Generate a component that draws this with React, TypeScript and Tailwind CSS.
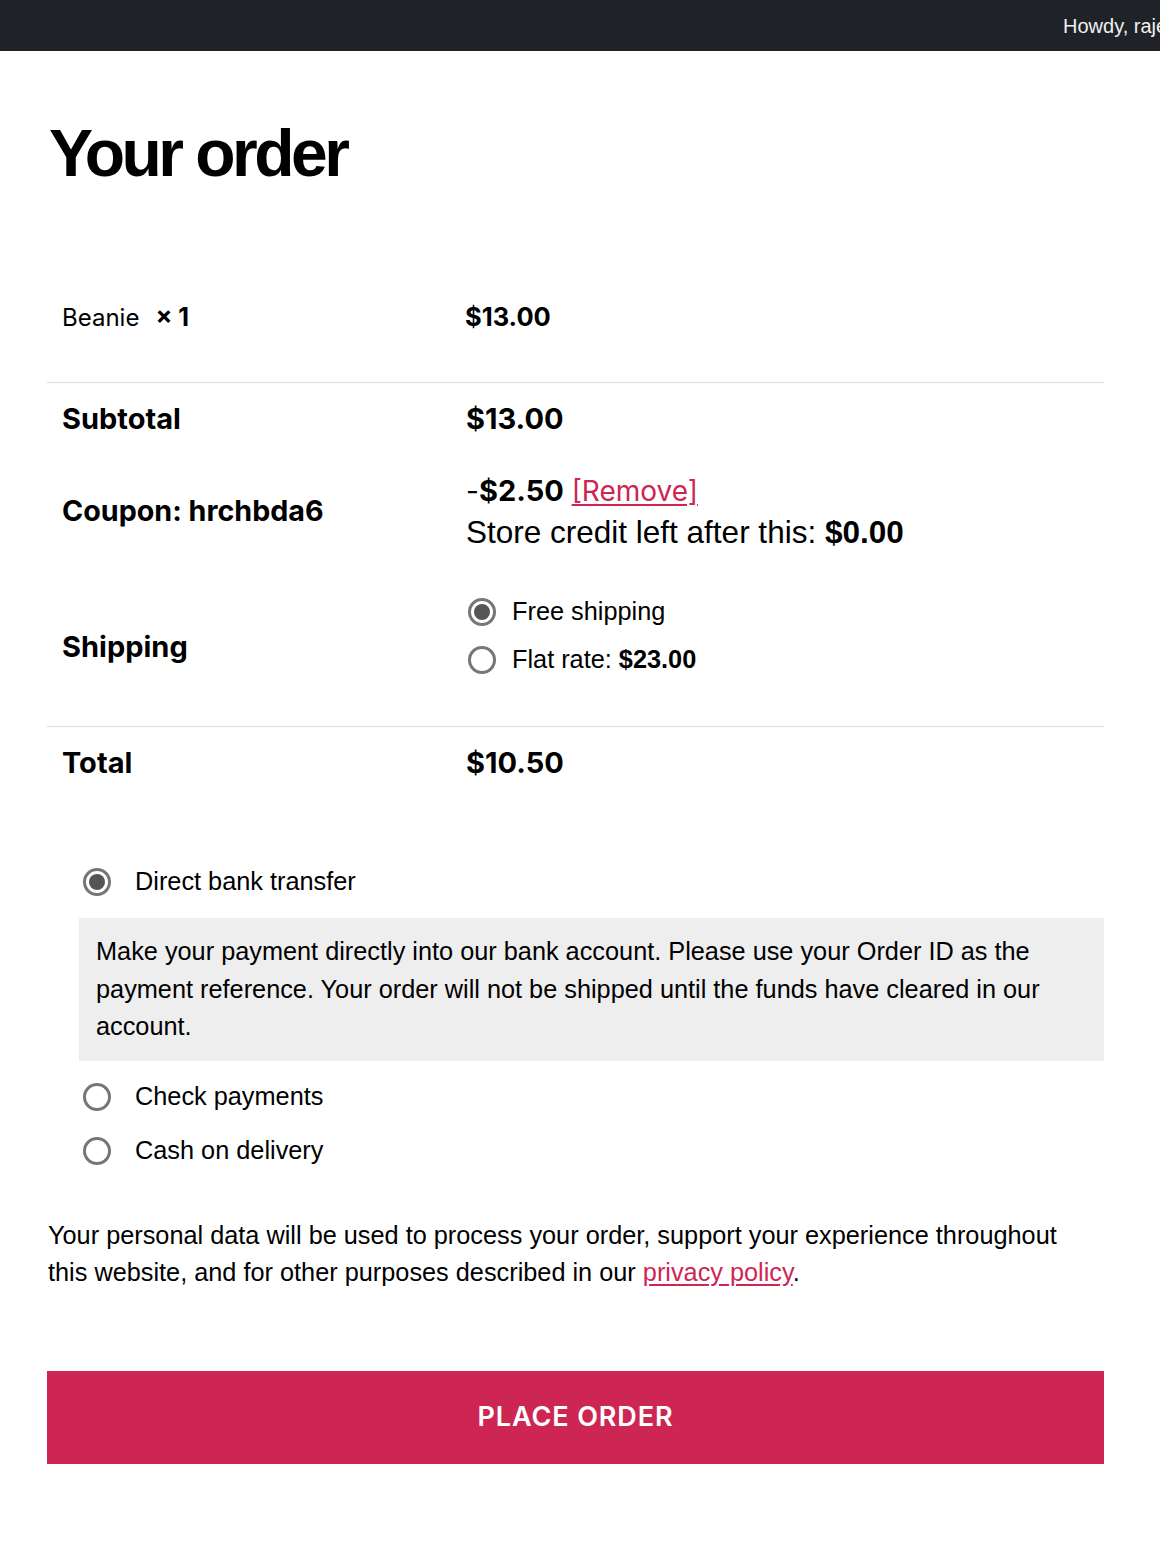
import React from "react";

const inter = "font-['Inter',sans-serif]";
const arial = "font-['Liberation_Sans',Arial,sans-serif]";

function Radio({ checked }: { checked?: boolean }) {
  return (
    <span className="flex h-[28px] w-[28px] shrink-0 items-center justify-center rounded-full border-[3px] border-[#767676] bg-white">
      {checked && <span className="h-[16px] w-[16px] rounded-full bg-[#555555]" />}
    </span>
  );
}

export default function App() {
  return (
    <div className="min-h-[1563px] bg-white text-black">
      {/* admin bar */}
      <div className="flex h-[51px] items-center justify-end bg-[#1f2327]">
        <div className={`w-[97px] overflow-hidden whitespace-nowrap text-[20px] text-[#f0f0f1] ${arial}`}>
          Howdy, rajesh
        </div>
      </div>

      <div className="mx-[47px] w-[1057px]">
        <h1 className={`mt-[69px] ml-[2px] text-[66px] font-bold leading-none tracking-[-0.053em] ${arial}`}>
          Your order
        </h1>

        {/* order table */}
        <div className={`mt-[67px] ${inter}`}>
          <div className="flex h-[130px] items-center border-b border-[#dbdbdb]">
            <div className="w-[418px] pl-[15px] text-[24px]">
              Beanie<strong className="ml-[16px] text-[25px] font-bold">×&nbsp;1</strong>
            </div>
            <div className="text-[25.5px] font-bold">$13.00</div>
          </div>

          <div className="flex h-[72px] items-center">
            <div className="w-[418px] pl-[15px] text-[29px] font-bold">Subtotal</div>
            <div className="pl-[1px] text-[29px] font-bold">$13.00</div>
          </div>

          <div className="flex h-[112px] items-center">
            <div className="w-[418px] pl-[15px] text-[28.7px] font-bold">Coupon: hrchbda6</div>
            <div className="pl-[1px] text-[28px] leading-[41px]">
              <div>
                -<span className="text-[29px] font-bold">$2.50</span>{" "}
                <a href="#" className="text-[#cd2653] underline decoration-[2px] underline-offset-[3px]">
                  [Remove]
                </a>
              </div>
              <div className={`text-[31.5px] ${arial}`}>
                Store credit left after this: <span className="font-bold">$0.00</span>
              </div>
            </div>
          </div>

          <div className="flex h-[160px] border-b border-[#dbdbdb]">
            <div className="flex w-[418px] items-center pl-[15px] text-[29px] font-bold">Shipping</div>
            <div className={`pt-[21px] pl-[3px] text-[25.3px] ${arial}`}>
              <div className="flex h-[48px] items-center gap-[16px]">
                <Radio checked />
                <span>Free shipping</span>
              </div>
              <div className="flex h-[48px] items-center gap-[16px]">
                <Radio />
                <span>
                  Flat rate: <span className="font-bold">$23.00</span>
                </span>
              </div>
            </div>
          </div>

          <div className="flex h-[72px] items-center">
            <div className="w-[418px] pl-[15px] text-[29px] font-bold">Total</div>
            <div className="pl-[1px] text-[29px] font-bold">$10.50</div>
          </div>
        </div>

        {/* payment methods */}
        <div className={`mt-[55px] pl-[32px] text-[25.3px] ${arial}`}>
          <div className="flex h-[56px] items-center gap-[24px] pl-[4px]">
            <Radio checked />
            <span>Direct bank transfer</span>
          </div>
          <div className="mt-[8px] bg-[#eeeeee] px-[17px] pt-[15px] pb-[15px] leading-[37.5px]">
            Make your payment directly into our bank account. Please use your Order ID as the payment reference. Your
            order will not be shipped until the funds have cleared in our account.
          </div>
          <div className="mt-[9px] flex h-[54px] items-center gap-[24px] pl-[4px]">
            <Radio />
            <span>Check payments</span>
          </div>
          <div className="flex h-[54px] items-center gap-[24px] pl-[4px]">
            <Radio />
            <span>Cash on delivery</span>
          </div>
        </div>

        {/* privacy */}
        <p className={`mt-[39px] pl-[1px] pr-[30px] text-[25.3px] leading-[37px] ${arial}`}>
          Your personal data will be used to process your order, support your experience throughout this website, and
          for other purposes described in our{" "}
          <a href="#" className="text-[#cd2653] underline underline-offset-[3px]">
            privacy policy
          </a>
          .
        </p>

        <button
          className={`mt-[80px] flex h-[93px] w-full items-center justify-center bg-[#cd2653] text-[27px] font-semibold uppercase tracking-[0.0333em] text-white ${inter}`}
        >
          Place order
        </button>
      </div>
    </div>
  );
}
